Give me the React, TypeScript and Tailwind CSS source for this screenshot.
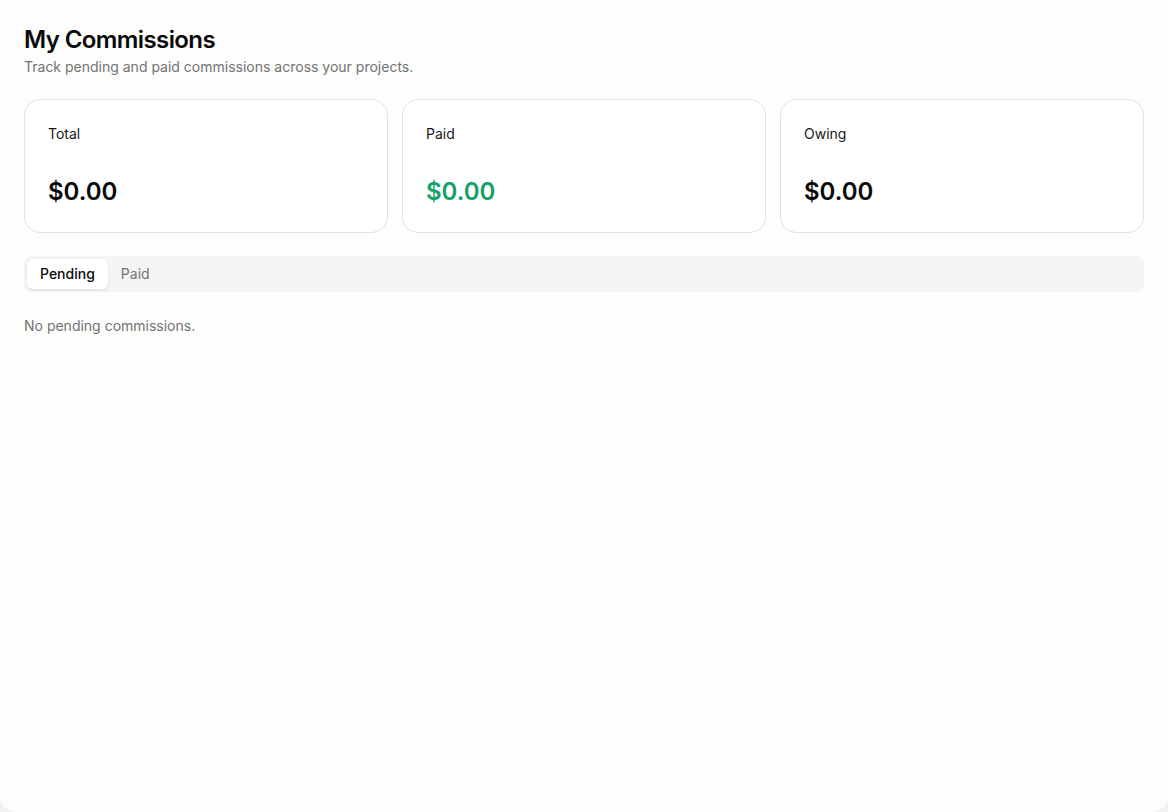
import React, { useState } from 'react';

interface Stat {
  label: string;
  value: string;
  valueClass: string;
}

const stats: Stat[] = [
  { label: 'Total', value: '$0.00', valueClass: 'text-[#0a0a0a]' },
  { label: 'Paid', value: '$0.00', valueClass: 'text-[#16a06a]' },
  { label: 'Owing', value: '$0.00', valueClass: 'text-[#0a0a0a]' },
];

const StatCard: React.FC<{ stat: Stat }> = ({ stat }) => (
  <div className="flex h-[134px] flex-col rounded-2xl border border-[#e2e2e2] bg-white px-[23px] pt-6">
    <p className="text-sm leading-5 text-[#171717]">{stat.label}</p>
    <p className={`mt-[32px] text-2xl font-semibold leading-8 ${stat.valueClass}`}>{stat.value}</p>
  </div>
);

const App: React.FC = () => {
  const [tab, setTab] = useState<'pending' | 'paid'>('pending');

  return (
    <div className="h-[812px] w-full bg-[#f2f2f2]" style={{ fontFamily: 'Inter, "Noto Sans", sans-serif' }}>
      <div className="h-full rounded-b-2xl bg-[#fdfdfc] px-6 pt-[26px]">
        {/* Header */}
        <h1 className="text-2xl font-semibold leading-7 tracking-tight text-[#0a0a0a]">My Commissions</h1>
        <p className="mt-[3px] text-sm leading-5 text-[#737373]">
          Track pending and paid commissions across your projects.
        </p>

        {/* Stats Cards */}
        <div className="mt-[22px] grid grid-cols-3 gap-[14px]">
          {stats.map((s) => (
            <StatCard key={s.label} stat={s} />
          ))}
        </div>

        {/* Tabs */}
        <div className="mt-[23px] flex h-9 items-center rounded-lg bg-[#f4f4f4] px-[3px]">
          <button
            onClick={() => setTab('pending')}
            className={`h-[30px] rounded-md px-[13px] text-sm leading-5 ${
              tab === 'pending' ? 'bg-white font-medium text-[#0a0a0a] shadow-[0_1px_3px_rgba(0,0,0,0.1)]' : 'text-[#737373]'
            }`}
          >
            Pending
          </button>
          <button
            onClick={() => setTab('paid')}
            className={`h-[30px] rounded-md px-[13px] text-sm leading-5 ${
              tab === 'paid' ? 'bg-white font-medium text-[#0a0a0a] shadow-[0_1px_3px_rgba(0,0,0,0.1)]' : 'text-[#737373]'
            }`}
          >
            Paid
          </button>
        </div>

        <p className="mt-6 text-sm leading-5 text-[#737373]">
          {tab === 'pending' ? 'No pending commissions.' : 'No paid commissions.'}
        </p>
      </div>
    </div>
  );
};

export default App;
